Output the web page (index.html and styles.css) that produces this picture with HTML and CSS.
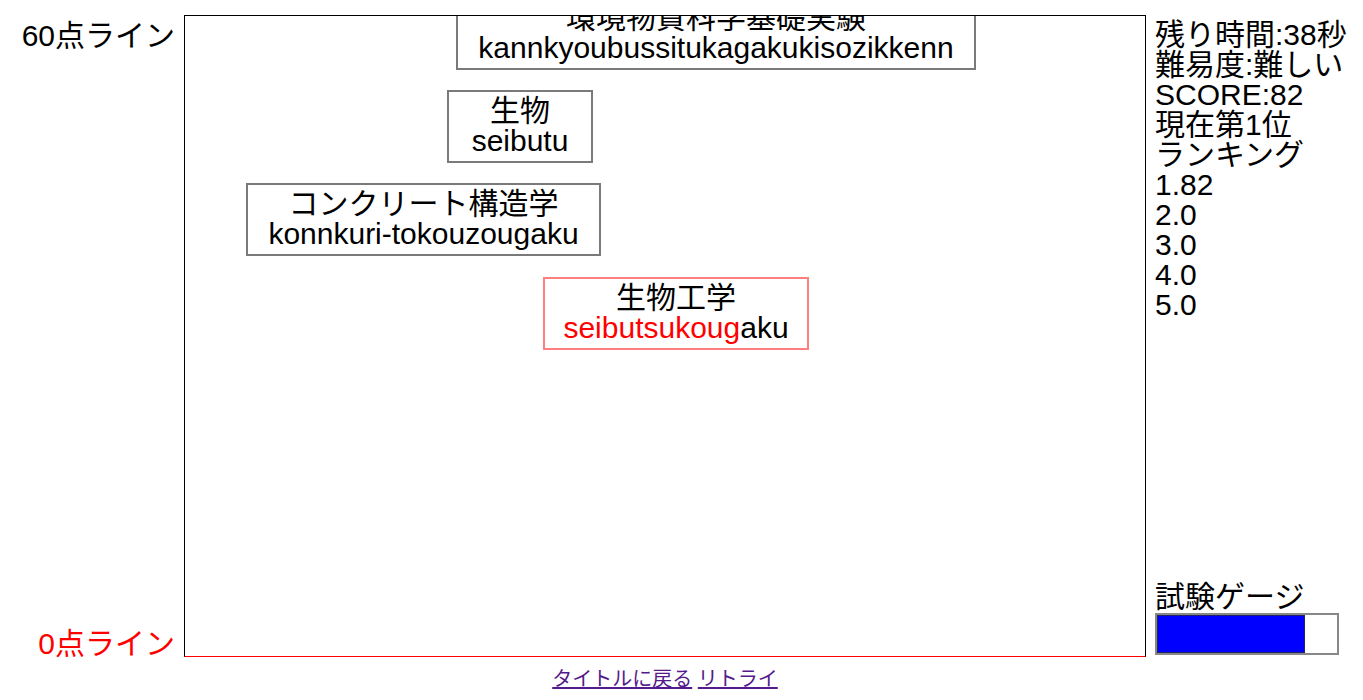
FILE: index.html
```html
<!DOCTYPE html>
<html lang="ja">
<head>
<meta charset="utf-8">
<title>タイピング</title>
<link rel="stylesheet" href="styles.css">
</head>
<body>
<div class="game">
  <div class="labels">
    <div class="line-label">60点ライン</div>
    <div class="line-label zero">0点ライン</div>
  </div>
  <div class="stage-col">
    <div class="stage">
      <div class="word" style="left:271px; top:-19px; width:520px;">
        <div class="jp">環境物質科学基礎実験</div>
        <div class="ro">kannkyoubussitukagakukisozikkenn</div>
      </div>
      <div class="word" style="left:262px; top:74px; width:146px;">
        <div class="jp">生物</div>
        <div class="ro">seibutu</div>
      </div>
      <div class="word" style="left:61px; top:167px; width:355px;">
        <div class="jp">コンクリート構造学</div>
        <div class="ro">konnkuri-tokouzougaku</div>
      </div>
      <div class="word active" style="left:358px; top:261px; width:266px;">
        <div class="jp">生物工学</div>
        <div class="ro"><span class="typed">seibutsukoug</span>aku</div>
      </div>
    </div>
    <div class="links">
      <a href="#title" class="link">タイトルに戻る</a>
      <a href="#retry" class="link">リトライ</a>
    </div>
  </div>
  <div class="panel">
    <div class="info">
      <div>残り時間:38秒</div>
      <div>難易度:難しい</div>
      <div>SCORE:82</div>
      <div>現在第1位</div>
      <div>ランキング</div>
      <div>1.82</div>
      <div>2.0</div>
      <div>3.0</div>
      <div>4.0</div>
      <div>5.0</div>
    </div>
    <div class="gauge-box">
      <div>試験ゲージ</div>
      <div class="gauge"><div class="gauge-fill" style="width:82%;"></div></div>
    </div>
  </div>
</div>
</body>
</html>
```

FILE: styles.css
```css
html, body {
  margin: 0;
  padding: 0;
  background: #fff;
}
body {
  font-family: "Liberation Sans", "Noto Sans CJK JP", sans-serif;
  font-size: 30px;
  line-height: 30px;
  color: #000;
}
.game {
  display: flex;
  align-items: flex-start;
  padding-top: 15px;
}
.labels {
  width: 184px;
  height: 642px;
  box-sizing: border-box;
  padding: 6px 9px 0 0;
  display: flex;
  flex-direction: column;
  justify-content: space-between;
  align-items: flex-end;
}
.line-label {
  white-space: nowrap;
}
.zero {
  color: #ff0000;
  margin-bottom: -2px;
}
.stage-col {
  display: flex;
  flex-direction: column;
}
.stage {
  position: relative;
  width: 960px;
  height: 640px;
  border: 1px solid #000;
  border-bottom-color: #ff0000;
  overflow: hidden;
}
.word {
  position: absolute;
  box-sizing: border-box;
  border: 2px solid #7a7a7a;
  padding: 4px 0 5px;
  text-align: center;
  white-space: nowrap;
  background: #fff;
}
.word.active {
  border-color: #ff7f7f;
}
.typed {
  color: #ff0000;
}
.links {
  text-align: center;
  font-size: 20px;
  line-height: 24px;
  padding-top: 10px;
}
.link {
  color: #551a8b;
  text-decoration: underline;
}
.panel {
  margin-left: 9px;
  height: 642px;
  padding-top: 5px;
  box-sizing: border-box;
  display: flex;
  flex-direction: column;
  justify-content: space-between;
}
.info {
  white-space: nowrap;
}
.gauge-box {
  padding-bottom: 2px;
}
.gauge {
  width: 180px;
  height: 38px;
  border: 2px solid #888;
  margin-top: 1px;
  display: flex;
}
.gauge-fill {
  height: 100%;
  box-sizing: border-box;
  background: #0000ff;
  border: 1px solid #222266;
}
```
